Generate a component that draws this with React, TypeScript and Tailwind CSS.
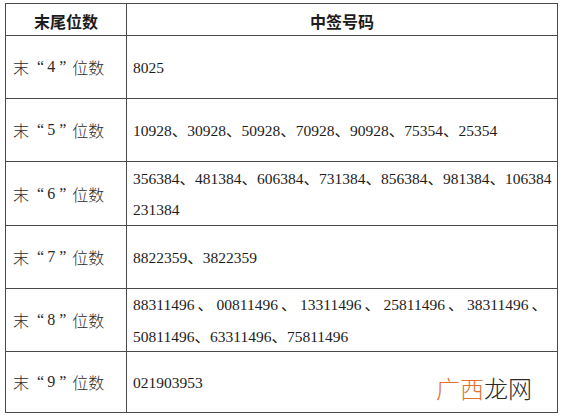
import React from 'react';

interface Row {
  digit: string;
  height: string;
  lines: string[];
  spread?: boolean;
}

const rows: Row[] = [
  { digit: '4', height: 'h-[63px]', lines: ['8025'] },
  { digit: '5', height: 'h-[63px]', lines: ['10928、30928、50928、70928、90928、75354、25354'] },
  {
    digit: '6',
    height: 'h-[64px]',
    lines: ['356384、481384、606384、731384、856384、981384、106384', '231384'],
  },
  { digit: '7', height: 'h-[63px]', lines: ['8822359、3822359'] },
  {
    digit: '8',
    height: 'h-[63px]',
    lines: ['88311496、00811496、13311496、25811496、38311496、', '50811496、63311496、75811496'],
    spread: true,
  },
  { digit: '9', height: 'h-[61px]', lines: ['021903953'] },
];

// numbers in serif, the 、 marks in the CJK face so they take a full em
const Numbers: React.FC<{ text: string }> = ({ text }) => {
  const parts = text.split(/(、)/);
  return (
    <>
      {parts.map((p, i) =>
        p === '、' ? (
          <span key={i} className="font-['Noto_Sans_CJK_SC',sans-serif]">
            、
          </span>
        ) : (
          <span key={i}>{p}</span>
        )
      )}
    </>
  );
};

const SpreadLine: React.FC<{ text: string }> = ({ text }) => {
  const items = text.split('、').filter((s) => s.length > 0);
  return (
    <div className="flex w-[414px] justify-between">
      {items.map((n, i) => (
        <span key={i}>
          {n}
          <span className="ml-[3px] font-['Noto_Sans_CJK_SC',sans-serif]">、</span>
        </span>
      ))}
    </div>
  );
};

const App: React.FC = () => {
  return (
    <div className="relative h-[419px] w-[567px] bg-white pl-[5px] pt-[3px] text-[#1c1c1c]">
      <div className="w-[553px] border-l border-t border-[#4a4a4a]">
        <div className="flex h-[32px] border-b border-[#4a4a4a] font-['Noto_Sans_CJK_SC',sans-serif] text-[16px] font-bold">
          <div className="flex w-[121px] items-center justify-center border-r border-[#4a4a4a] pt-[2px]">
            末尾位数
          </div>
          <div className="flex flex-1 items-center justify-center border-r border-[#4a4a4a] pt-[2px]">
            中签号码
          </div>
        </div>
        {rows.map((row) => (
          <div key={row.digit} className={`flex ${row.height} border-b border-[#4a4a4a]`}>
            <div className="flex w-[121px] items-center border-r border-[#4a4a4a] pl-[7px] font-['Noto_Sans_CJK_SC',sans-serif] text-[16px] font-light text-[#2a2a2a]">
              <span>末</span>
              <span className="ml-[8px] font-['Liberation_Serif',serif]">“</span>
              <span className="ml-[3px] font-['Liberation_Serif',serif]">{row.digit}</span>
              <span className="ml-[4px] font-['Liberation_Serif',serif]">”</span>
              <span className="ml-[6px]">位数</span>
            </div>
            <div className="flex flex-1 flex-col justify-center border-r border-[#4a4a4a] pl-[6px] font-['Liberation_Serif',serif] text-[15.5px] leading-[31px] whitespace-nowrap">
              {row.lines.map((line, i) =>
                row.spread && i === 0 ? (
                  <SpreadLine key={i} text={line} />
                ) : (
                  <div key={i}>
                    <Numbers text={line} />
                  </div>
                )
              )}
            </div>
          </div>
        ))}
      </div>
      <div className="absolute left-[436px] top-[373px] font-['Noto_Sans_CJK_SC',sans-serif] text-[24px] font-light leading-[30px]">
        <span className="text-[#e0712e]">广西</span>
        <span className="text-[#2a2a2a]">龙网</span>
      </div>
    </div>
  );
};

export default App;
